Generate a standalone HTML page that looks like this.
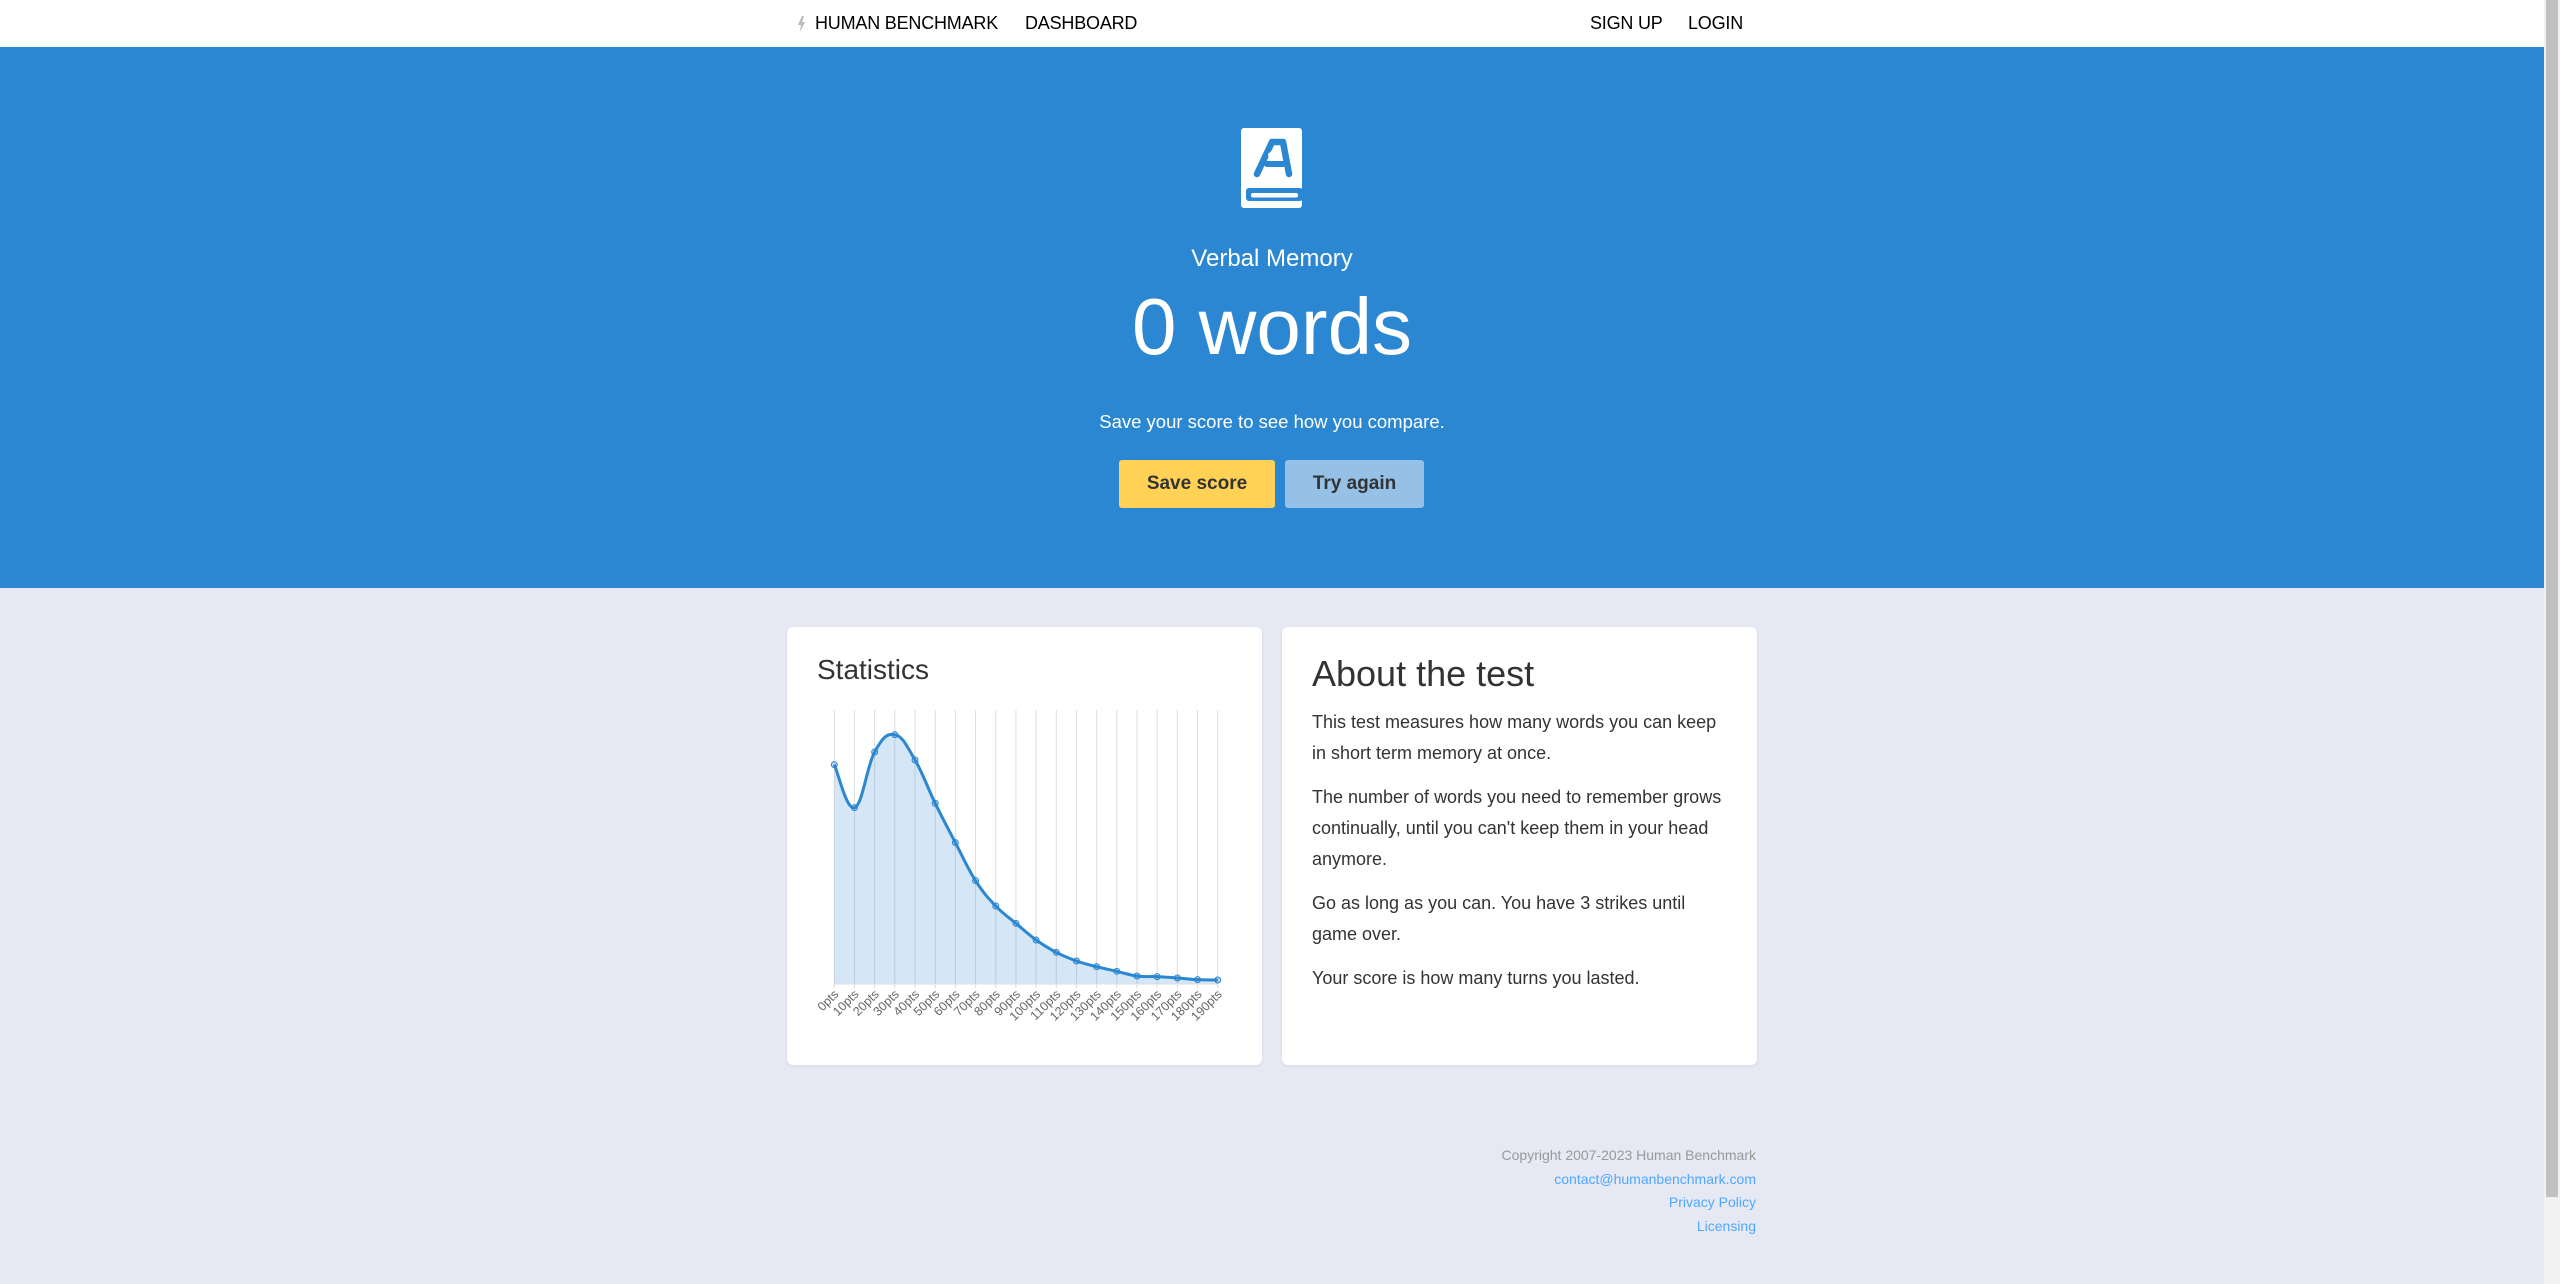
<!DOCTYPE html>
<html><head><meta charset="utf-8">
<style>
*{margin:0;padding:0;box-sizing:border-box}
html,body{width:2560px;height:1284px;overflow:hidden}
body{background:#e6e8f4;font-family:"Liberation Sans",Arial,sans-serif;position:relative;color:#333}
.nav{position:absolute;left:0;top:0;width:2544px;height:47px;background:#fff}
.nav span{position:absolute;top:13px;font-size:18px;color:#000;letter-spacing:-0.2px}
.hero{position:absolute;left:0;top:47px;width:2544px;height:541px;background:#2b87d1;color:#fff;text-align:center}
.abs{position:absolute}
.btn{position:absolute;top:460px;height:48px;border-radius:3px;font-weight:bold;font-size:19px;color:#333;display:flex;align-items:center;justify-content:center}
.card{position:absolute;top:627px;height:438px;background:#fff;border-radius:6px;box-shadow:0 1px 3px rgba(0,0,0,.08)}
.about p{font-size:18px;line-height:31px;margin-bottom:13px;color:#333}
.foot{position:absolute;right:804px;text-align:right;font-size:14px}
.sb{position:absolute;right:0;top:0;width:16px;height:1284px;background:#f1f1f1}
.sb div{position:absolute;left:2px;top:0;width:12px;height:1197px;background:#c1c1c1}
</style></head><body>
<div class="nav">
<svg class="abs" style="left:797px;top:16px" width="9" height="16" viewBox="0 0 9 16"><path d="M5 0L1 9h3l-1 7 5-10H5l2-6z" fill="#bbb"/></svg>
<span style="left:815px">HUMAN BENCHMARK</span>
<span style="left:1025px">DASHBOARD</span>
<span style="left:1590px">SIGN UP</span>
<span style="left:1688px">LOGIN</span>
</div>
<div class="hero">
<svg class="abs" style="left:1241px;top:81px" width="62" height="80" viewBox="0 0 62 80">
<rect x="0" y="0" width="61" height="80" rx="3" fill="#fff"/>
<rect x="5" y="60" width="57" height="13" rx="3" fill="#2b87d1"/>
<rect x="10" y="65" width="47" height="4.5" rx="2" fill="#fff"/>
<path d="M16 46 L31 14 L42 14 L48 46" fill="none" stroke="#2b87d1" stroke-width="6.5" stroke-linecap="round" stroke-linejoin="round"/>
<path d="M26 36 L42 36" stroke="#2b87d1" stroke-width="6" stroke-linecap="round"/>
<path d="M27 26 L34 20 L37 32 L28 32 Z" fill="#fff"/>
</svg>
<div class="abs" style="left:0;width:2544px;top:198px;font-size:24px">Verbal Memory</div>
<div class="abs" style="left:0;width:2544px;top:230px;font-size:80px;line-height:100px">0 words</div>
<div class="abs" style="left:0;width:2544px;top:364px;font-size:18.5px">Save your score to see how you compare.</div>
</div>
<div class="btn" style="left:1119px;width:156px;background:#ffd154">Save score</div>
<div class="btn" style="left:1285px;width:139px;background:#95c1e7">Try again</div>

<div class="card" style="left:787px;width:475px">
<div class="abs" style="left:30px;top:27px;font-size:28px;color:#333">Statistics</div>
</div>
<svg class="abs" style="left:0;top:0" width="2544" height="1284" id="ch"></svg>

<div class="card about" style="left:1282px;width:475px;padding:26px 30px">
<div style="font-size:36px;margin-bottom:12px;color:#333">About the test</div>
<p>This test measures how many words you can keep in short term memory at once.</p>
<p>The number of words you need to remember grows continually, until you can't keep them in your head anymore.</p>
<p>Go as long as you can. You have 3 strikes until game over.</p>
<p>Your score is how many turns you lasted.</p>
</div>

<div class="foot" style="top:1147px;color:#999">Copyright 2007-2023 Human Benchmark</div>
<div class="foot" style="top:1171px;color:#4fa8ff">contact@humanbenchmark.com</div>
<div class="foot" style="top:1194px;color:#4fa8ff">Privacy Policy</div>
<div class="foot" style="top:1218px;color:#4fa8ff">Licensing</div>
<div class="sb"><div></div></div>
<script>
(function(){
var zy=[434,563,396,344,420,550,668,782,858,910,960,997,1023,1040,1054,1068,1070,1074,1079,1080];
var P=zy.map(function(v,i){return [834.3+i*20.18,620+v/3];});
var base=984,gtop=710,s='';
for(var i=0;i<20;i++){s+='<line x1="'+P[i][0]+'" y1="'+gtop+'" x2="'+P[i][0]+'" y2="'+(base+4)+'" stroke="#ddd" stroke-width="1"/>';
s+='<text x="0" y="0" font-size="12.5" fill="#666" font-family="Liberation Sans,sans-serif" text-anchor="end" transform="translate('+(P[i][0]+5)+','+(base+11)+') rotate(-45)">'+(i*10)+'pts</text>';}
var d='M'+P[0][0]+','+P[0][1];
for(var i=0;i<19;i++){var p0=P[Math.max(i-1,0)],p1=P[i],p2=P[i+1],p3=P[Math.min(i+2,19)];
var t=0.2;d+=' C'+(p1[0]+(p2[0]-p0[0])*t)+','+(p1[1]+(p2[1]-p0[1])*t)+' '+(p2[0]-(p3[0]-p1[0])*t)+','+(p2[1]-(p3[1]-p1[1])*t)+' '+p2[0]+','+p2[1];}
s+='<path d="'+d+' L'+P[19][0]+','+base+' L'+P[0][0]+','+base+' Z" fill="rgba(43,135,209,0.2)"/>';
s+='<line x1="'+P[0][0]+'" y1="'+base+'" x2="'+P[19][0]+'" y2="'+base+'" stroke="#ddd"/>';
s+='<path d="'+d+'" fill="none" stroke="#2b87d1" stroke-width="3"/>';
P.forEach(function(p){s+='<circle cx="'+p[0]+'" cy="'+p[1]+'" r="3" fill="rgba(43,135,209,0.3)" stroke="#2b87d1" stroke-width="1"/>';});
document.getElementById('ch').innerHTML=s;
})();
</script>
</body></html>
